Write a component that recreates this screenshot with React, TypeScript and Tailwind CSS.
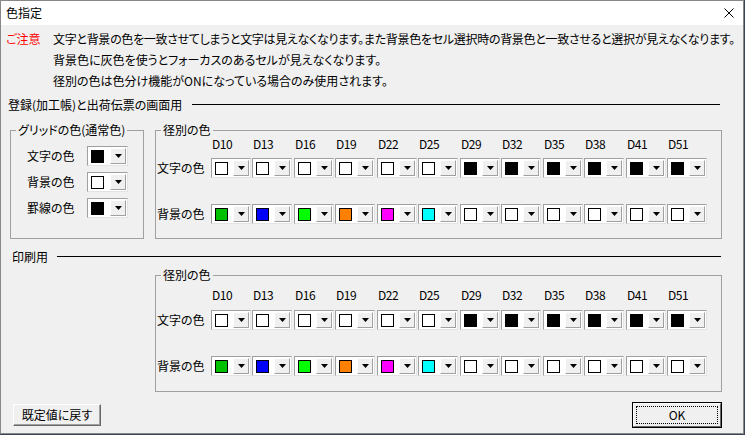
import React from "react";

const swatch: Record<string, string> = {
  white: "bg-white",
  black: "bg-black",
  green: "bg-[#00c000]",
  blue: "bg-[#0000ff]",
  lime: "bg-[#00ff00]",
  orange: "bg-[#ff8000]",
  magenta: "bg-[#ff00ff]",
  cyan: "bg-[#00ffff]",
};

const columns = [
  { name: "D10", w: "w-[41px]", text: "white", back: "green" },
  { name: "D13", w: "w-[42px]", text: "white", back: "blue" },
  { name: "D16", w: "w-[41px]", text: "white", back: "lime" },
  { name: "D19", w: "w-[42px]", text: "white", back: "orange" },
  { name: "D22", w: "w-[41px]", text: "white", back: "magenta" },
  { name: "D25", w: "w-[42px]", text: "white", back: "cyan" },
  { name: "D29", w: "w-[41px]", text: "black", back: "white" },
  { name: "D32", w: "w-[42px]", text: "black", back: "white" },
  { name: "D35", w: "w-[41px]", text: "black", back: "white" },
  { name: "D38", w: "w-[42px]", text: "black", back: "white" },
  { name: "D41", w: "w-[41px]", text: "black", back: "white" },
  { name: "D51", w: "w-[40px]", text: "black", back: "white" },
];

function Picker({ color, wide }: { color: string; wide?: boolean }) {
  return (
    <div
      className={`flex h-[20px] ${wide ? "w-[41px]" : "w-[40px]"} items-center border border-t-[#a0a0a0] border-l-[#a0a0a0] border-r-[#e3e3e3] border-b-[#e3e3e3] bg-white`}
    >
      <div className={`ml-[3px] h-[13px] w-[13px] border border-black ${swatch[color]}`} />
      <div className="ml-auto mr-px flex h-[16px] w-[16px] items-center justify-center border border-t-white border-l-white border-r-[#a0a0a0] border-b-[#a0a0a0] bg-[#f0f0f0]">
        <svg width="7" height="4" viewBox="0 0 7 4">
          <path d="M0 0h7L3.5 4z" fill="#000" />
        </svg>
      </div>
    </div>
  );
}

function Rule() {
  return <div className="h-px flex-1 bg-black" />;
}

function DiameterGroup({ print }: { print?: boolean }) {
  return (
    <fieldset
      className={`border border-[#a0a0a0] ${print ? "ml-[154px] h-[125px]" : "ml-[11px] h-[117px]"} w-[567px]`}
    >
      <legend className="ml-[5px] px-[2px] leading-[16px]">径別の色</legend>
      <div className={`flex pl-[55px] leading-[12px] ${print ? "mt-[6px]" : ""}`}>
        {columns.map((c) => (
          <div key={c.name} className={`${c.w} pl-px tracking-[-0.5px]`}>
            {c.name}
          </div>
        ))}
      </div>
      <div className={`flex items-center pl-[1px] ${print ? "mt-[9px]" : "mt-[8px]"}`}>
        <div className="w-[54px]">文字の色</div>
        {columns.map((c) => (
          <div key={c.name} className={c.w}>
            <Picker color={c.text} />
          </div>
        ))}
      </div>
      <div className="mt-[26px] flex items-center pl-[1px]">
        <div className="w-[54px]">背景の色</div>
        {columns.map((c) => (
          <div key={c.name} className={c.w}>
            <Picker color={c.back} />
          </div>
        ))}
      </div>
    </fieldset>
  );
}

export default function App() {
  return (
    <div className="h-[435px] w-[745px] bg-[#3a4452] font-['Noto_Sans_CJK_JP','Liberation_Sans',sans-serif] text-[12px] text-black [font-feature-settings:'palt']">
      <div className="flex h-[434px] w-[744px] flex-col border border-[#888888] bg-[#f0f0f0]">
        <div className="flex h-[24px] items-center bg-white pl-[5px]">
          <span>色指定</span>
          <svg className="ml-auto mr-[9px]" width="10" height="10" viewBox="0 0 10 10">
            <path d="M0.5 0.5l9 9M9.5 0.5l-9 9" stroke="#000" strokeWidth="1" />
          </svg>
        </div>

        <div className="flex pt-[3px] leading-[21px]">
          <div className="w-[52px] shrink-0 pl-[5px] text-[#ff0000]">ご注意</div>
          <div className="min-w-0 flex-1">
            <div className="whitespace-nowrap tracking-[-0.3px]">
              文字と背景の色を一致させてしまうと文字は見えなくなります。また背景色をセル選択時の背景色と一致させると選択が見えなくなります。
            </div>
            <div>背景色に灰色を使うとフォーカスのあるセルが見えなくなります。</div>
            <div>径別の色は色分け機能がONになっている場合のみ使用されます。</div>
          </div>
        </div>

        <div className="mt-[3px] flex h-[21px] items-center gap-[10px] pl-[7px] pr-[23px]">
          <span>登録(加工帳)と出荷伝票の画面用</span>
          <Rule />
        </div>

        <div className="mt-[7px] flex">
          <fieldset className="ml-[9px] h-[117px] w-[134px] border border-[#a0a0a0]">
            <legend className="ml-[5px] px-[2px] leading-[16px]">グリッドの色(通常色)</legend>
            <div className="flex flex-col gap-[6px] pl-[16px] pt-[8px]">
              {[
                ["文字の色", "black"],
                ["背景の色", "white"],
                ["罫線の色", "black"],
              ].map(([label, color]) => (
                <div key={label} className="flex items-center">
                  <div className="w-[60px]">{label}</div>
                  <Picker color={color} wide />
                </div>
              ))}
            </div>
          </fieldset>
          <DiameterGroup />
        </div>

        <div className="mt-[7px] flex h-[21px] items-center gap-[9px] pl-[11px] pr-[22px]">
          <span>印刷用</span>
          <Rule />
        </div>

        <DiameterGroup print />

        <div className="mt-[10px] flex items-center pl-[12px] pr-[21px]">
          <button className="flex h-[22px] w-[88px] items-center justify-center border border-t-white border-l-white border-r-[#696969] border-b-[#696969] bg-[#f0f0f0] shadow-[inset_-1px_-1px_0_#a0a0a0]">
            既定値に戻す
          </button>
          <button className="ml-auto flex h-[26px] w-[90px] border border-black bg-[#f0f0f0] p-0">
            <div className="flex h-full w-full border border-t-white border-l-white border-r-[#696969] border-b-[#696969] p-[2px]">
              <div className="flex flex-1 items-center justify-center border border-dotted border-black">
                OK
              </div>
            </div>
          </button>
        </div>
      </div>
    </div>
  );
}
